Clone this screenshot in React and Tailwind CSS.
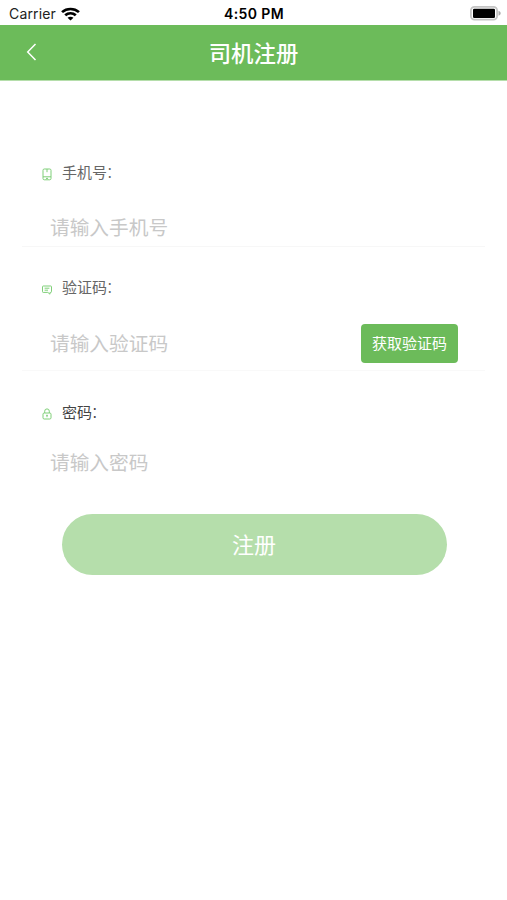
import React, { useState } from "react";

function WifiIcon() {
  return (
    <svg width="19" height="14" viewBox="0 0 18 14" preserveAspectRatio="none" fill="none" stroke="#000" strokeWidth="2.6">
      <path d="M1 5.1C5.6 .9 12.4 .9 17 5.1" />
      <path d="M4 8.3C6.9 5.6 11.1 5.6 14 8.3" />
      <path d="M9 13.6 6.2 10.8C7.8 9.5 10.2 9.5 11.8 10.8Z" fill="#000" stroke="none" />
    </svg>
  );
}

function BatteryIcon() {
  return (
    <svg width="31" height="15" viewBox="0 0 31 15">
      <rect x="0.9" y="0.9" width="26.2" height="12.8" rx="3.6" fill="#fff" stroke="#c4c4c4" strokeWidth="1.8" />
      <rect x="3" y="2.8" width="22" height="9.2" rx="1.2" fill="#000" />
      <path d="M28.5 4.8v5c1.3-.4 2.2-1.4 2.2-2.5S29.8 5.2 28.5 4.8Z" fill="#aaa" />
    </svg>
  );
}

function PhoneIcon() {
  return (
    <svg width="10" height="13" viewBox="0 0 10 13" fill="none" stroke="#7fcf78" strokeWidth="1">
      <rect x="1" y="1" width="8" height="10.8" rx="1.3" />
      <path d="M1 8.8h8M4 10.4h2M5 1v3.2" />
    </svg>
  );
}

function MessageIcon() {
  return (
    <svg width="10" height="10" viewBox="0 0 10 10" fill="none" stroke="#7fcf78" strokeWidth="1">
      <path d="M1.2 1h7.6a.7.7 0 0 1 .7.7v5a.7.7 0 0 1-.7.7H8v1.8L5.8 7.4H1.2a.7.7 0 0 1-.7-.7v-5a.7.7 0 0 1 .7-.7Z" />
      <path d="M2.6 3.2h4.8M2.6 5.2h3.4" />
    </svg>
  );
}

function LockIcon() {
  return (
    <svg width="10" height="13" viewBox="0 0 10 13" fill="none" stroke="#7fcf78" strokeWidth="1">
      <rect x="1" y="5" width="8" height="6" rx="1.2" />
      <path d="M2.7 5V3.2a2.3 2.3 0 0 1 4.6 0V5M5 7v2.2M4.2 7.3h1.6" />
    </svg>
  );
}

function Label({ icon, children, className = "text-[#666]" }) {
  return (
    <label className={`flex h-6 items-center pl-5 text-[15px] leading-6 ${className}`}>
      <span className="mt-[3px] mr-2.5 flex w-2.5 justify-center">{icon}</span>
      <span className="pb-0.5">{children}</span>
      <span className="-ml-px pb-1 font-light">：</span>
    </label>
  );
}

function Field({ value, onChange, placeholder, type = "text" }) {
  return (
    <input
      type={type}
      value={value}
      onChange={(e) => onChange(e.target.value)}
      placeholder={placeholder}
      className="h-8 w-60 bg-transparent pb-px text-[19.7px] text-[#333] outline-none placeholder:text-[#c8c8c8]"
    />
  );
}

function App() {
  const [phone, setPhone] = useState("");
  const [code, setCode] = useState("");
  const [password, setPassword] = useState("");

  return (
    <div className="min-h-[900px] w-full bg-white font-['Noto_Sans_CJK_SC',sans-serif]">
      {/* Status bar */}
      <div className="grid h-[25px] grid-cols-3 items-center pr-1.5 pl-[9px] font-['Inter','Noto_Sans_CJK_SC',sans-serif] text-[14px] text-black">
        <div className="flex items-center gap-[5px] pt-0.5">
          <span className="tracking-[0.15px] text-[#222]">Carrier</span>
          <WifiIcon />
        </div>
        <span className="pt-0.5 pr-0.5 text-center font-semibold tracking-[0.4px]">4:50 PM</span>
        <div className="flex justify-end pt-0.5">
          <BatteryIcon />
        </div>
      </div>

      {/* Header */}
      <header className="grid h-14 grid-cols-[60px_1fr_60px] items-center border-b border-[#b5deab] bg-[#6cbb5a] text-white">
        <button aria-label="返回" className="flex pb-px pl-[26px]">
          <svg width="11" height="18" viewBox="0 0 11 18" fill="none" stroke="#fff" strokeWidth="1.5">
            <path d="M9.5 1 1.7 9l7.8 8" />
          </svg>
        </button>
        <h1 className="pb-0.5 text-center text-[22.4px] leading-8 font-medium">司机注册</h1>
      </header>

      <form className="px-[22px] pt-20" onSubmit={(e) => e.preventDefault()}>
        <div className="h-[86px] border-b border-[#f7f7f7]">
          <Label icon={<PhoneIcon />}>手机号</Label>
          <div className="mt-[26px] pl-7">
            <Field value={phone} onChange={setPhone} placeholder="请输入手机号" />
          </div>
        </div>

        <div className="h-[124px] border-b border-[#f9f9f9] pt-[29px]">
          <Label icon={<MessageIcon />}>验证码</Label>
          <div className="mt-6 flex items-center justify-between pr-[27px] pl-7">
            <div className="pb-0.5">
              <Field value={code} onChange={setCode} placeholder="请输入验证码" />
            </div>
            <button className="h-[39px] w-[97px] rounded-[4px] bg-[#6cbb5a] text-[15px] text-white">
              获取验证码
            </button>
          </div>
        </div>

        <div className="pt-[30px]">
          <Label icon={<LockIcon />} className="text-[#444]">密码</Label>
          <div className="mt-[21px] pl-7">
            <Field type="password" value={password} onChange={setPassword} placeholder="请输入密码" />
          </div>
        </div>

        <button className="mt-9 ml-[39.5px] block h-[61px] w-[385px] rounded-full bg-[#b5deab] pb-0.5 text-[22px] text-white">
          注册
        </button>
      </form>
    </div>
  );
}

export default App;
